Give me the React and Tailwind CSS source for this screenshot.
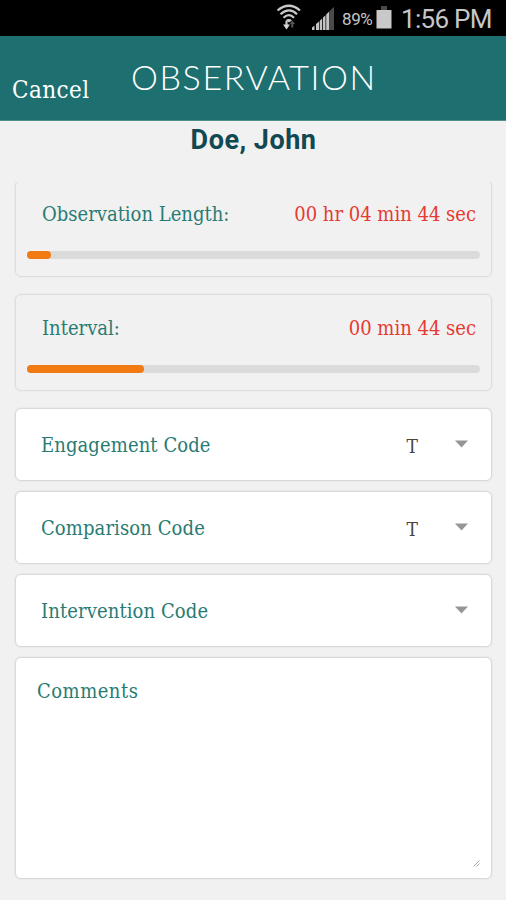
const codes = [
  { label: 'Engagement Code', value: 'T' },
  { label: 'Comparison Code', value: 'T' },
  { label: 'Intervention Code', value: '' },
];

const slab = "font-['Roboto_Slab','DejaVu_Serif_Condensed','DejaVu_Serif',serif]";

function WifiIcon() {
  return (
    <svg width="26" height="28" viewBox="0 0 26 28" fill="none" stroke="#c9c9c9" strokeWidth="2.2">
      <path d="M1.5 6.5Q13 -3 24 6.5" />
      <path d="M4.5 10.2Q13 2.5 21 10.2" />
      <path d="M7.5 13.7Q13 8.5 18 13.7" />
      <path d="M9.5 16.3Q13 13.6 16 16.3L13 18.5Z" fill="#c9c9c9" stroke="none" />
      <path d="M10.5 17V22" strokeWidth="2.2" />
      <path d="M7 20.5H14L10.5 25.5Z" fill="#d8d8d8" stroke="none" />
      <path d="M16.3 23.5V19" stroke="#555" strokeWidth="2" />
      <path d="M13.7 20H19L16.3 16.5Z" fill="#555" stroke="none" />
    </svg>
  );
}

function SignalIcon() {
  return (
    <svg width="24" height="24" viewBox="0 0 24 24">
      <path d="M18.5 5L23 1V24H18.5Z" fill="#4a4a4a" />
      <path d="M1 21.5L3.5 19.5V24H1ZM5 18L8 15.5V24H5ZM8.7 14.8L11.2 12.5V24H8.7ZM12 11.5L14.5 9.2V24H12ZM15.2 8.5L18.2 5.5V24H15.2Z" fill="#c4c4c4" />
    </svg>
  );
}

function StatusBar() {
  return (
    <div className="flex h-9 shrink-0 items-start bg-black pl-[276px] pt-[4px] font-[Roboto,sans-serif] text-[#c6c6c6]">
      <WifiIcon />
      <div className="ml-[9px] mt-[2px]"><SignalIcon /></div>
      <span className="ml-[7px] mt-[4px] w-[34px] whitespace-nowrap text-[17px] leading-[22px] tracking-[-0.4px]">89%</span>
      <svg className="mt-[2px]" width="16" height="23" viewBox="0 0 16 23">
        <path d="M5 0H11V4H5Z" fill="#4a4a4a" />
        <path d="M0.5 4H15.5V22.5H0.5Z" fill="#c9c9c9" />
      </svg>
      <span className="ml-[9px] whitespace-nowrap text-[26px] leading-[31px] tracking-[-0.7px]">1:56 PM</span>
    </div>
  );
}

function TimerCard({ label, time, percent }) {
  return (
    <div className="h-[97px] shrink-0 rounded-md border border-[#dddddd] px-[11px] pt-[19px] shadow-[0_0_1px_1px_#ebebeb]">
      <div className="flex justify-between pl-[15px] pr-[4px] text-[20px] leading-[28px]">
        <span className="text-[#287b73]">{label}</span>
        <span className="text-[#e63a33]">{time}</span>
      </div>
      <div className="mt-[23px] h-[8px] rounded-full bg-[#dbdbdb]">
        <div className="h-full rounded-full bg-[#f27a13]" style={{ width: `${percent}%` }} />
      </div>
    </div>
  );
}

function CodeSelect({ label, value }) {
  return (
    <div className="flex h-[73px] shrink-0 items-center rounded-md border border-[#d9d9d9] bg-white pl-[25px] pr-[22px] text-[20px] shadow-[0_0_1px_1px_#e9e9e9]">
      <span className="flex-1 tracking-[0.1px] text-[#287b73]">{label}</span>
      <span className="mr-[36px] mt-[3px] text-[19px] text-[#444]">{value}</span>
      <svg className="-mt-[2px]" width="15" height="8" viewBox="0 0 15 8">
        <path d="M1 0.5H14L7.5 7.5Z" fill="#969696" />
      </svg>
    </div>
  );
}

export default function App() {
  return (
    <div className="flex h-[900px] w-[506px] flex-col overflow-hidden bg-[#f1f1f1]">
      <StatusBar />
      <header className="flex h-[85px] shrink-0 items-start border-b border-[#4e8e8b] bg-[#1d6f70] text-white">
        <span className={`mt-[38px] w-[120px] pl-[12px] text-[24px] leading-[32px] tracking-[0.4px] ${slab}`}>Cancel</span>
        <h1 className="mt-[20px] whitespace-nowrap pl-[11px] font-[Lato,sans-serif] text-[34px] font-light leading-[42px] tracking-[1.6px]">OBSERVATION</h1>
      </header>
      <h2 className="h-[61px] shrink-0 pl-px pt-[3px] text-center font-[Roboto,sans-serif] text-[27px] font-bold leading-[32px] tracking-[0.5px] text-[#114852]">Doe, John</h2>
      <main className={`flex flex-1 flex-col overflow-hidden pl-[15px] pr-[14px] ${slab}`}>
        <div className="-mt-[2px] flex flex-col gap-[17px]">
          <TimerCard label="Observation Length:" time="00 hr 04 min 44 sec" percent={5.3} />
          <TimerCard label="Interval:" time="00 min 44 sec" percent={25.8} />
        </div>
        <div className="mt-[17px] flex flex-col gap-[10px]">
          {codes.map((c) => (
            <CodeSelect key={c.label} {...c} />
          ))}
          <div className="flex h-[222px] items-start justify-between rounded-md border border-[#d9d9d9] bg-white pb-[11px] pl-[21px] pr-[11px] pt-[19px] text-[20px] leading-[28px] shadow-[0_0_1px_1px_#e9e9e9]">
            <span className="tracking-[0.5px] text-[#287b73]">Comments</span>
            <svg className="self-end" width="7" height="7" viewBox="0 0 7 7" stroke="#aaa" strokeWidth="1">
              <path d="M0.5 6.5L6.5 0.5M3.5 6.5L6.5 3.5" />
            </svg>
          </div>
        </div>
      </main>
    </div>
  );
}
